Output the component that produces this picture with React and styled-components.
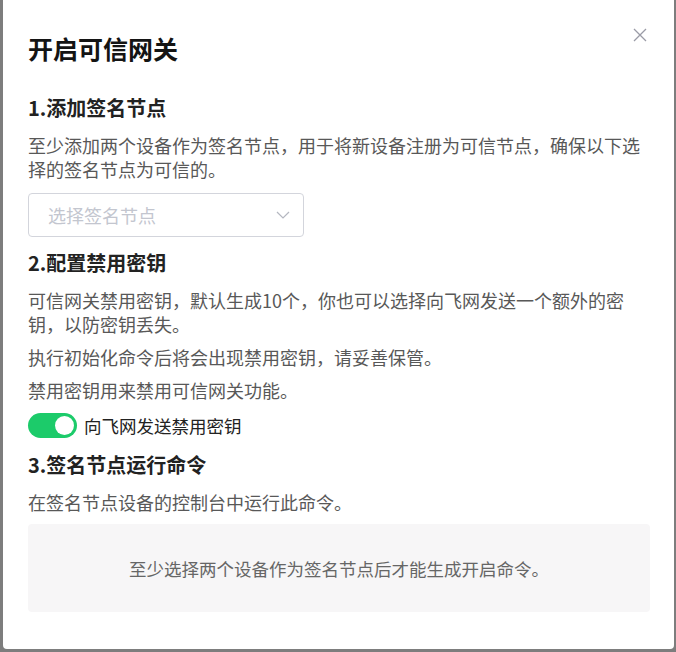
import React, { useState } from 'react';
import styled, { createGlobalStyle } from 'styled-components';

const GlobalStyle = createGlobalStyle`
  html, body {
    margin: 0;
    padding: 0;
    background: #7d7d7d;
  }
  body {
    font-family: "Noto Sans CJK SC", "Noto Sans", sans-serif;
  }
`;

const Overlay = styled.div`
  width: 676px;
  height: 652px;
  padding-left: 3px;
  box-sizing: border-box;
`;

const Modal = styled.div`
  position: relative;
  width: 671px;
  height: 649px;
  box-sizing: border-box;
  padding: 32px 24px 0 25px;
  background: #fff;
  border-radius: 0 0 4px 4px;
  display: flex;
  flex-direction: column;
`;

const Title = styled.h1`
  margin: 0 0 30px;
  font-size: 25px;
  line-height: 32px;
  font-weight: 700;
  color: #141414;
`;

const CloseButton = styled.button`
  position: absolute;
  top: 27px;
  right: 26px;
  width: 16px;
  height: 16px;
  padding: 0;
  border: none;
  background: none;
  cursor: pointer;
  display: flex;
  align-items: center;
  justify-content: center;
`;

const Section = styled.section`
  display: flex;
  flex-direction: column;
  align-items: flex-start;
  margin-bottom: ${(p) => p.$space || 12}px;
`;

const Heading = styled.h2`
  margin: 0 0 11px;
  font-size: 20px;
  line-height: 28px;
  font-weight: 700;
  color: #222;
`;

const Text = styled.p`
  margin: 0 0 9px;
  font-size: 18px;
  line-height: 24px;
  color: #585858;
`;

const Select = styled.div`
  margin-top: 3px;
  width: 276px;
  height: 44px;
  box-sizing: border-box;
  border: 1px solid #d3d5dc;
  border-radius: 4px;
  padding: 0 13px 0 19px;
  display: flex;
  align-items: center;
  justify-content: space-between;
  cursor: pointer;
`;

const Placeholder = styled.span`
  font-size: 18px;
  color: #c3c6cf;
`;

const ToggleRow = styled.label`
  margin-top: 2px;
  display: flex;
  align-items: center;
  gap: 7px;
  cursor: pointer;
`;

const Track = styled.span`
  width: 49px;
  height: 25px;
  box-sizing: border-box;
  padding: 3px;
  border-radius: 13px;
  background: ${(p) => (p.$on ? '#1ccb6a' : '#d0d3da')};
  display: flex;
  justify-content: ${(p) => (p.$on ? 'flex-end' : 'flex-start')};
`;

const Knob = styled.span`
  width: 19px;
  height: 19px;
  border-radius: 50%;
  background: #fff;
`;

const ToggleLabel = styled.span`
  font-size: 17.5px;
  line-height: 24px;
  color: #222;
`;

const CommandBox = styled.div`
  margin-top: 1px;
  align-self: stretch;
  height: 88px;
  border-radius: 4px;
  background: #f7f6f7;
  display: flex;
  align-items: center;
  justify-content: center;
  font-size: 17.5px;
  color: #666;
`;

function Chevron() {
  return (
    <svg width="14" height="8" viewBox="0 0 14 8" fill="none">
      <path d="M1 1l6 6 6-6" stroke="#b4b7c0" strokeWidth="1.2" />
    </svg>
  );
}

function CloseIcon() {
  return (
    <svg width="14" height="14" viewBox="0 0 14 14" fill="none">
      <path d="M1 1l12 12M13 1L1 13" stroke="#9a9ba6" strokeWidth="1.3" />
    </svg>
  );
}

export default function App() {
  const [sendKey, setSendKey] = useState(true);
  return (
    <Overlay>
      <GlobalStyle />
      <Modal>
        <CloseButton aria-label="close">
          <CloseIcon />
        </CloseButton>
        <Title>开启可信网关</Title>

        <Section>
          <Heading>1.添加签名节点</Heading>
          <Text>至少添加两个设备作为签名节点，用于将新设备注册为可信节点，确保以下选择的签名节点为可信的。</Text>
          <Select>
            <Placeholder>选择签名节点</Placeholder>
            <Chevron />
          </Select>
        </Section>

        <Section $space={13}>
          <Heading>2.配置禁用密钥</Heading>
          <Text>可信网关禁用密钥，默认生成10个，你也可以选择向飞网发送一个额外的密钥，以防密钥丢失。</Text>
          <Text>执行初始化命令后将会出现禁用密钥，请妥善保管。</Text>
          <Text>禁用密钥用来禁用可信网关功能。</Text>
          <ToggleRow onClick={() => setSendKey(!sendKey)}>
            <Track $on={sendKey}>
              <Knob />
            </Track>
            <ToggleLabel>向飞网发送禁用密钥</ToggleLabel>
          </ToggleRow>
        </Section>

        <Section>
          <Heading>3.签名节点运行命令</Heading>
          <Text>在签名节点设备的控制台中运行此命令。</Text>
          <CommandBox>至少选择两个设备作为签名节点后才能生成开启命令。</CommandBox>
        </Section>
      </Modal>
    </Overlay>
  );
}
